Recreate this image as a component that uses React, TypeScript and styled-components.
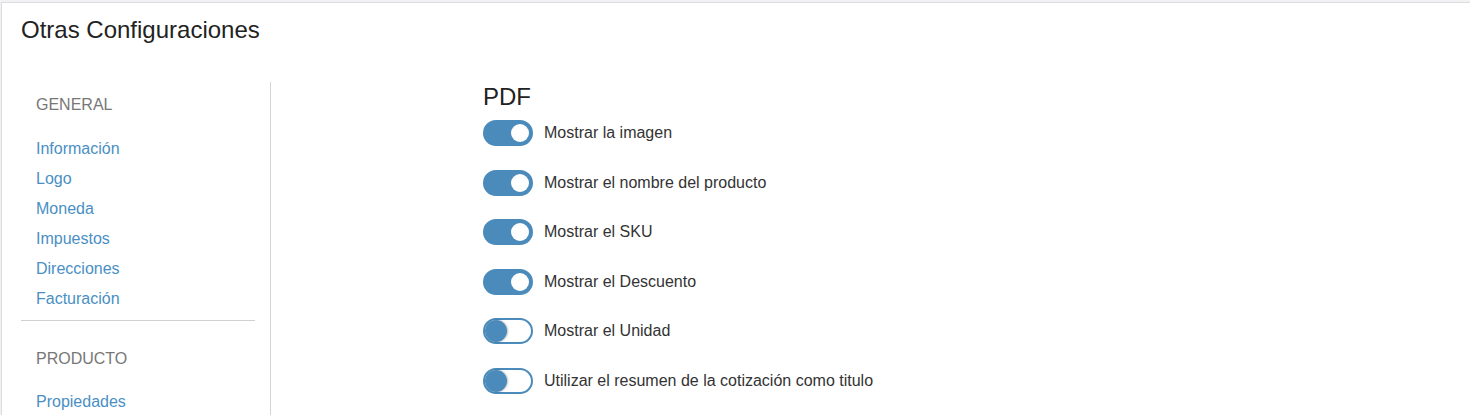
import React, { useState } from 'react';
import styled, { createGlobalStyle } from 'styled-components';

const GlobalStyle = createGlobalStyle`
  html, body {
    margin: 0;
    padding: 0;
    background: #f2f2f5;
    font-family: 'Liberation Sans', Arial, sans-serif;
    color: #333;
    overflow: hidden;
  }
`;

const Page = styled.div`
  padding: 2px 0 0 1px;
  height: 415px;
  box-sizing: border-box;
  overflow: hidden;
`;

const Card = styled.div`
  background: #fff;
  border: 1px solid #dcdcdf;
  border-right: none;
  border-bottom: none;
  min-height: 100%;
  box-sizing: border-box;
  padding: 13px 0 0 19px;
`;

const Title = styled.h3`
  margin: 0 0 38px 0;
  font-size: 24px;
  line-height: 28px;
  font-weight: 400;
  color: #222;
`;

const Layout = styled.div`
  display: flex;
  align-items: flex-start;
`;

const Sidebar = styled.nav`
  width: 249px;
  flex-shrink: 0;
  border-right: 1px solid #d5d5d5;
  padding-top: 13px;
  min-height: 400px;
`;

const SectionHeader = styled.div<{ $gap?: number }>`
  padding-left: 15px;
  font-size: 16px;
  line-height: 20px;
  color: #777;
  text-transform: uppercase;
  margin-bottom: ${(p) => p.$gap ?? 19}px;
`;

const NavLink = styled.a`
  display: block;
  padding-left: 15px;
  font-size: 16px;
  line-height: 30px;
  color: #4a8fc4;
  text-decoration: none;
`;

const Divider = styled.hr`
  border: none;
  border-top: 1px solid #d0d0d0;
  margin: 6px 15px 28px 0;
`;

const Content = styled.section`
  padding: 2px 0 0 212px;
`;

const SectionTitle = styled.h4`
  margin: 0 0 10px 0;
  font-size: 24px;
  line-height: 26px;
  font-weight: 400;
  color: #222;
`;

const OptionRow = styled.label`
  display: flex;
  align-items: center;
  gap: 11px;
  height: 26px;
  margin-bottom: 23.5px;
  font-size: 16px;
  color: #333;
  cursor: pointer;
`;

const Track = styled.span<{ $on: boolean }>`
  position: relative;
  width: 50px;
  height: 26px;
  box-sizing: border-box;
  border-radius: 13px;
  border: 2px solid #4a8bbb;
  background: ${(p) => (p.$on ? '#4a8bbb' : '#fff')};
  flex-shrink: 0;
`;

const Knob = styled.span<{ $on: boolean }>`
  position: absolute;
  border-radius: 50%;
  ${(p) =>
    p.$on
      ? `
    width: 18px;
    height: 18px;
    top: 2px;
    right: 2px;
    background: #fff;
  `
      : `
    width: 22px;
    height: 22px;
    top: 0;
    left: 0;
    background: #4a8bbb;
    box-shadow: 1px 0 2px rgba(0, 0, 0, 0.25);
  `}
`;

const general = ['Información', 'Logo', 'Moneda', 'Impuestos', 'Direcciones', 'Facturación'];
const producto = ['Propiedades'];

const initialOptions = [
  { label: 'Mostrar la imagen', on: true },
  { label: 'Mostrar el nombre del producto', on: true },
  { label: 'Mostrar el SKU', on: true },
  { label: 'Mostrar el Descuento', on: true },
  { label: 'Mostrar el Unidad', on: false },
  { label: 'Utilizar el resumen de la cotización como titulo', on: false },
];

const App: React.FC = () => {
  const [options, setOptions] = useState(initialOptions);

  const toggle = (index: number) => {
    setOptions(options.map((o, i) => (i === index ? { ...o, on: !o.on } : o)));
  };

  return (
    <Page>
      <GlobalStyle />
      <Card>
        <Title>Otras Configuraciones</Title>
        <Layout>
          <Sidebar>
            <SectionHeader>General</SectionHeader>
            {general.map((item) => (
              <NavLink key={item} href="#">
                {item}
              </NavLink>
            ))}
            <Divider />
            <SectionHeader $gap={18}>Producto</SectionHeader>
            {producto.map((item) => (
              <NavLink key={item} href="#">
                {item}
              </NavLink>
            ))}
          </Sidebar>
          <Content>
            <SectionTitle>PDF</SectionTitle>
            {options.map((opt, i) => (
              <OptionRow key={opt.label} onClick={() => toggle(i)}>
                <Track $on={opt.on}>
                  <Knob $on={opt.on} />
                </Track>
                {opt.label}
              </OptionRow>
            ))}
          </Content>
        </Layout>
      </Card>
    </Page>
  );
};

export default App;
